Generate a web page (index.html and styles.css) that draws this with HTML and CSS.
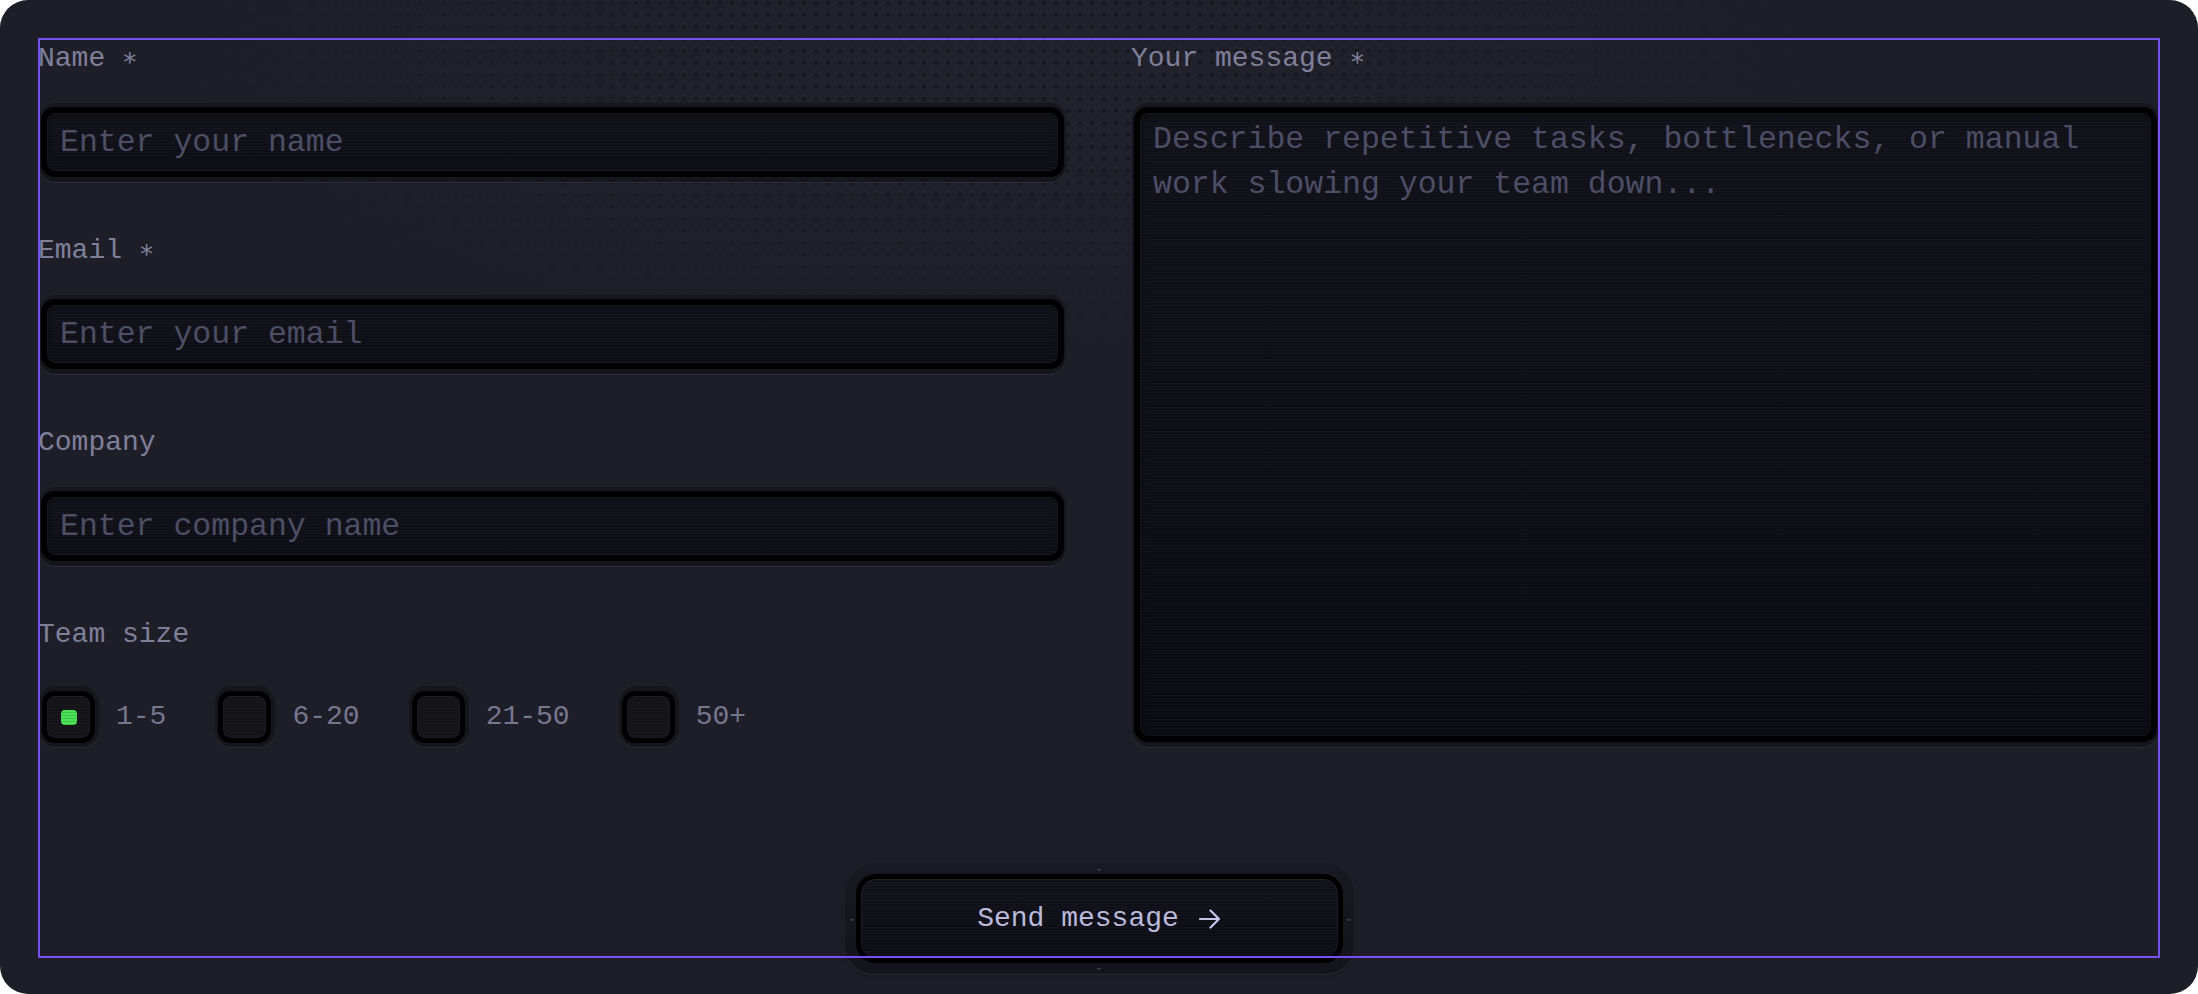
FILE: index.html
```html
<!DOCTYPE html>
<html lang="en">
<head>
<meta charset="utf-8">
<title>Contact form</title>
<link rel="stylesheet" href="styles.css">
</head>
<body>
<div class="panel">
  <form class="form">
    <div class="grid">
      <div class="col-left">
        <div class="field">
          <label class="label" for="name">Name <span class="req">∗</span></label>
          <div class="well"><input class="input" id="name" type="text" placeholder="Enter your name"></div>
        </div>
        <div class="field">
          <label class="label" for="email">Email <span class="req">∗</span></label>
          <div class="well"><input class="input" id="email" type="email" placeholder="Enter your email"></div>
        </div>
        <div class="field">
          <label class="label" for="company">Company</label>
          <div class="well"><input class="input" id="company" type="text" placeholder="Enter company name"></div>
        </div>
        <div class="field">
          <span class="label">Team size</span>
          <div class="radios">
            <label class="radio"><span class="radio-ring"><span class="radio-box"><span class="radio-dot"></span></span></span>1-5</label>
            <label class="radio"><span class="radio-ring"><span class="radio-box"></span></span>6-20</label>
            <label class="radio"><span class="radio-ring"><span class="radio-box"></span></span>21-50</label>
            <label class="radio"><span class="radio-ring"><span class="radio-box"></span></span>50+</label>
          </div>
        </div>
      </div>
      <div class="field col-right">
        <label class="label" for="message">Your message <span class="req">∗</span></label>
        <div class="well well-area"><textarea class="input textarea" id="message" placeholder="Describe repetitive tasks, bottlenecks, or manual work slowing your team down..."></textarea></div>
      </div>
    </div>
    <div class="actions">
      <div class="btn-well">
        <span class="notch notch-top"></span>
        <span class="notch notch-bottom"></span>
        <span class="notch notch-left"></span>
        <span class="notch notch-right"></span>
        <button class="btn" type="button">Send message<svg class="arrow" width="22" height="22" viewBox="0 0 22 22" fill="none"><path d="M1 11h19M11.5 2.5L20 11l-8.5 8.5" stroke="#c3c4e8" stroke-width="2.2" stroke-linecap="round" stroke-linejoin="round"/></svg></button>
      </div>
    </div>
  </form>
</div>
</body>
</html>
```
FILE: styles.css
```css
html, body {
  margin: 0;
  padding: 0;
  background: #ffffff;
  overflow: hidden;
}

.panel {
  position: relative;
  width: 2198px;
  height: 994px;
  box-sizing: border-box;
  padding: 38px;
  border-radius: 28px;
  background: #1e1e29;
  overflow: hidden;
}

.panel::after {
  content: "";
  position: absolute;
  inset: 0;
  background: radial-gradient(ellipse 900px 340px at 1000px 60px, rgba(255, 255, 255, 0.02), rgba(255, 255, 255, 0) 100%);
  pointer-events: none;
}

.panel::before {
  content: "";
  position: absolute;
  inset: 0;
  background-image: radial-gradient(circle at center, rgba(12, 12, 18, 0.5) 1.6px, rgba(12, 12, 18, 0) 2.3px);
  background-size: 12px 12px;
  background-position: 6px 9px;
  -webkit-mask-image: radial-gradient(ellipse 800px 310px at 1000px 50px, #000 25%, transparent 100%);
  mask-image: radial-gradient(ellipse 800px 310px at 1000px 50px, #000 25%, transparent 100%);
  pointer-events: none;
  z-index: 1;
}

.form {
  position: relative;
  z-index: 2;
  height: 920px;
  font-family: "Liberation Mono", "DejaVu Sans Mono", monospace;
}

.form::after {
  content: "";
  position: absolute;
  inset: 0;
  border: 2px solid #7950f2;
  pointer-events: none;
  z-index: 5;
}

.grid {
  display: grid;
  grid-template-columns: 1fr 1fr;
  column-gap: 64px;
}

.col-left {
  display: flex;
  flex-direction: column;
  gap: 47px;
}

.field {
  display: flex;
  flex-direction: column;
}

.label {
  display: block;
  height: 42px;
  font-size: 28px;
  line-height: 42px;
  color: #7e809a;
  margin-bottom: 22px;
}

.req {
  font-family: "DejaVu Sans Mono", monospace;
  font-size: 26px;
  line-height: 0;
}

.well {
  background: #16161e;
  border-radius: 18px;
  padding: 5px 3px 6px;
  box-shadow: inset 0 0 0 1px rgba(255, 255, 255, 0.04), inset 0 -1px 0 rgba(255, 255, 255, 0.07);
}

.input {
  display: block;
  width: 100%;
  box-sizing: border-box;
  height: 70px;
  margin: 0;
  border: 6px solid #000;
  border-radius: 14px;
  padding: 0 13px;
  outline: none;
  font-family: "Liberation Mono", "DejaVu Sans Mono", monospace;
  font-size: 31.5px;
  color: #c0c0d8;
  background:
    repeating-linear-gradient(to bottom, rgba(255, 255, 255, 0.02) 0 1px, rgba(255, 255, 255, 0) 1px 3px),
    linear-gradient(to bottom, #12121b, #0d0d15);
  box-shadow: inset 0 0 0 1px rgba(255, 255, 255, 0.035), inset 0 3px 6px rgba(0, 0, 0, 0.35);
}

.input::placeholder {
  color: #4c4e65;
  opacity: 1;
}

.col-right {
  min-height: 0;
}

.well-area {
  flex: 1;
  display: flex;
}

.textarea {
  flex: 1;
  height: auto;
  resize: none;
  padding: 4px 13px;
  line-height: 45px;
  overflow: hidden;
  background:
    repeating-linear-gradient(to bottom, rgba(255, 255, 255, 0.018) 0 1px, rgba(255, 255, 255, 0) 1px 3px),
    linear-gradient(to bottom, #11111a, #0b0b13);
}

.radios {
  display: flex;
  gap: 48px;
  margin-top: 7px;
}

.radio {
  display: flex;
  align-items: center;
  gap: 16px;
  font-size: 28px;
  line-height: 42px;
  color: #75778f;
}

.radio-ring {
  display: block;
  width: 62px;
  height: 63px;
  box-sizing: border-box;
  padding: 6px 5px 5px 4px;
  border-radius: 18px;
  background: #15151c;
  box-shadow: inset 0 0 0 1px rgba(255, 255, 255, 0.045), inset 0 -1px 0 rgba(255, 255, 255, 0.06);
}

.radio-box {
  display: flex;
  align-items: center;
  justify-content: center;
  width: 100%;
  height: 100%;
  box-sizing: border-box;
  border: 5px solid #000;
  border-radius: 13px;
  background:
    repeating-linear-gradient(to bottom, rgba(255, 255, 255, 0.02) 0 1px, rgba(255, 255, 255, 0) 1px 3px),
    #131318;
  box-shadow: inset 0 0 0 1px rgba(255, 255, 255, 0.03);
}

.radio-dot {
  display: block;
  width: 16px;
  height: 15px;
  border-radius: 4px;
  background: repeating-linear-gradient(to bottom, #4fe05a 0 2px, #37c845 2px 3px);
}

.actions {
  display: flex;
  justify-content: center;
  margin-top: 114px;
}

.btn-well {
  position: relative;
  padding: 12px;
  border-radius: 30px;
  background: linear-gradient(to bottom, #191923, #14141c);
  box-shadow: inset 0 0 0 1px rgba(255, 255, 255, 0.04), inset 0 -1px 0 rgba(255, 255, 255, 0.06), 0 2px 4px rgba(0, 0, 0, 0.2);
}

.btn {
  display: flex;
  align-items: center;
  justify-content: center;
  gap: 20px;
  width: 487px;
  height: 89px;
  margin: 0;
  padding: 0;
  border: 5px solid #000;
  border-radius: 20px;
  font-family: "Liberation Mono", "DejaVu Sans Mono", monospace;
  font-size: 28px;
  color: #b9badc;
  cursor: pointer;
  background:
    repeating-linear-gradient(to bottom, rgba(255, 255, 255, 0.02) 0 1px, rgba(255, 255, 255, 0) 1px 3px),
    linear-gradient(to bottom, #12121c, #0c0c14);
  box-shadow: inset 0 0 0 1px rgba(255, 255, 255, 0.05);
}

.arrow {
  display: block;
  flex: none;
}

.notch {
  position: absolute;
  width: 4px;
  height: 2px;
  border-radius: 0 0 3px 3px;
  background: #3a3a4a;
}

.notch-top { left: 253px; top: 7px; }
.notch-bottom { left: 253px; bottom: 5px; }
.notch-left { left: 6px; top: 57px; }
.notch-right { right: 4px; top: 57px; }
```
